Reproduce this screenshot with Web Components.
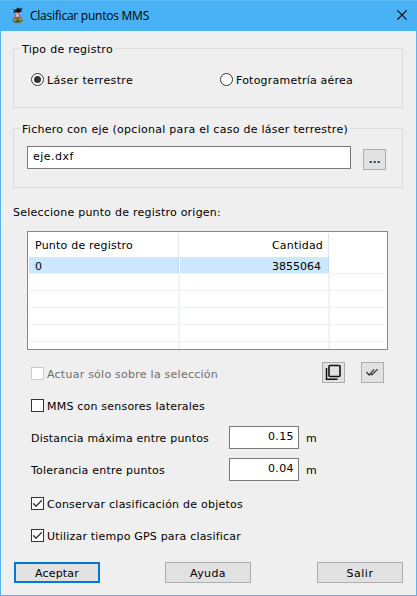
<!DOCTYPE html>
<html lang="es">
<head>
<meta charset="utf-8">
<title>Clasificar puntos MMS</title>
<style>
html,body{margin:0;padding:0}
body{width:417px;height:596px;overflow:hidden;font:11px/16px "DejaVu Sans",sans-serif;color:#000}
</style>
</head>
<body>
<mms-dialog></mms-dialog>
<script>
const make = (name, html, ready) => {
  const t = document.createElement('template');
  t.innerHTML = html;
  customElements.define(name, class extends HTMLElement {
    constructor() {
      super();
      this.attachShadow({ mode: 'open' }).appendChild(t.content.cloneNode(true));
    }
    connectedCallback() { if (ready) ready.call(this, this.shadowRoot); }
  });
};

// Text run tracked to an exact width
make('ui-text', `<style>
:host{display:block;height:14px;white-space:pre;flex:none}
span{display:inline-block}
</style><span><slot></slot></span>`, function (r) {
  const w = +this.getAttribute('w'), s = r.querySelector('span');
  this.style.width = w + 'px';
  const n = this.textContent.length;
  s.style.letterSpacing = (w - s.getBoundingClientRect().width) / n + 'px';
});

make('ui-titlebar', `<style>
:host{display:flex;height:31px;box-sizing:border-box;background:#49b2f4;border-top:1px solid #5cb9f3;padding:0 10px 0 11px;align-items:flex-start;font:12px/14px "Open Sans","Noto Sans",sans-serif}
.logo{margin:5px 5px 0 0;flex:none}
.t{margin-top:8px}
.x{margin:9px 0 0 auto;flex:none}
</style>
<svg class="logo" width="14" height="18" viewBox="0 0 14 18">
<path d="M1.500 3.500l3 .2L7 1.500l1.500 1.300L11.500 2 10 4.200l1.500.8L9 6 7.500 7.300 5 6.300 2 7 3.500 5z" fill="#111722"/>
<path d="M5.500 6.500L3.500 12M7 6.500L9.500 12" stroke="#d8475a" stroke-width="1.200" fill="none"/>
<path d="M5.500 7h1.500l1.500 4.500H4.500z" fill="#e4b9c8"/>
<ellipse cx="6.700" cy="14" rx="5" ry="3.300" fill="#66713c"/>
<path d="M3 13h2.500v1.500H3zM8 12.500h2.500V14H8z" fill="#b0a06d"/><path d="M5.500 14h2v2h-2zM3.500 15.500h2v1h-2z" fill="#3f5424"/>
</svg>
<div class="t"><slot></slot></div>
<svg class="x" width="10" height="10" viewBox="0 0 10 10"><path d="M.3.3l9.400 9.400M9.700.3L.3 9.700" stroke="#000" stroke-width="1.100"/></svg>`);

make('ui-group', `<style>
:host{display:block;box-sizing:border-box;width:390px;height:60px;border:1px solid #dcdcdc}
.l{display:block;width:fit-content;margin:-7px 0 0 6px;padding:0 2px;background:#efefef}
.b{display:flex;align-items:flex-start}
</style><div class="l"><slot name="legend"></slot></div><div class="b"><slot></slot></div>`);

make('ui-radio', `<style>
:host{display:flex;height:14px;gap:3px;flex:none}
svg{flex:none}
circle.d{display:none}
:host([checked]) circle.d{display:inline}
</style><svg width="13" height="13"><circle cx="6.5" cy="6.5" r="6" fill="#fff" stroke="#333"/><circle class="d" cx="6.5" cy="6.5" r="3.5" fill="#333"/></svg><slot></slot>`);

make('ui-check', `<style>
:host{display:flex;height:14px;gap:3px;flex:none}
svg{flex:none}
rect{fill:#fff;stroke:#333}
path{display:none;fill:none;stroke:#333;stroke-width:1.3}
:host([checked]) path{display:inline}
:host([disabled]){color:#6d6d6d}
:host([disabled]) rect{stroke:#ccc}
</style><svg width="13" height="13"><rect x=".5" y=".5" width="12" height="12"/><path d="M2.2 6.3l2.8 2.9 5.8-5.9"/></svg><slot></slot>`);

make('ui-field', `<style>
:host{display:flex;box-sizing:border-box;height:23px;border:1px solid #7a7a7a;background:#fff;padding:2px 5px 0;flex:none}
:host([num]){justify-content:flex-end;width:70px;padding-right:4px}
</style><slot></slot>`);

make('ui-button', `<style>
:host{display:flex;box-sizing:border-box;width:86px;height:21px;border:1px solid #adadad;background:#e1e1e1;justify-content:center;align-items:flex-start;padding-top:3px;flex:none}
:host([default]){border:2px solid #0078d7;padding-top:2px}
:host([icon]){width:23px;padding:0}
</style><slot></slot>`);

make('ui-table', `<style>
:host{display:block;box-sizing:border-box;width:361px;height:119px;border:1px solid #828790;background:#fff;padding:1px}
.r{display:grid;grid-template-columns:151px 150px 1fr;height:16px;border-bottom:1px solid #f0f0f0}
.h{display:grid;grid-template-columns:150px 150px 1fr;height:24px}
.r>div,.h>div{box-sizing:border-box;border-right:2px solid #edf2fb;padding-left:6px}
.h>div{border-right:1px solid #e5e5e5;padding-top:5px}
.r>div:last-child,.h>div:last-child{border:0;padding:0}
.n{display:flex;justify-content:flex-end}
.s>div{padding-top:2px}
.s>div:not(:last-child){background:#cce8ff;border-right:1px solid #b9ddf8;margin-right:1px}
.s .n{padding-right:7px}
.h .n{padding-right:5px}
.r.z{border:0;height:7px}
</style>
<div class="h"><div><slot name="h1"></slot></div><div class="n"><slot name="h2"></slot></div><div></div></div>
<div class="r s"><div><slot name="c1"></slot></div><div class="n"><slot name="c2"></slot></div><div></div></div>
<div class="r"><div></div><div></div><div></div></div>
<div class="r"><div></div><div></div><div></div></div>
<div class="r"><div></div><div></div><div></div></div>
<div class="r"><div></div><div></div><div></div></div>
<div class="r z"><div></div><div></div><div></div></div>`);

make('mms-dialog', `<style>
:host{display:flex;flex-direction:column;box-sizing:border-box;width:417px;height:596px;background:#efefef}
main{flex:1;box-sizing:border-box;border:1px solid #5ab5ee;border-top:0;padding:17px 0 0 12px;min-height:0}
.row{display:flex;align-items:flex-start}
</style>
<ui-titlebar><ui-text w="119">Clasificar puntos MMS</ui-text></ui-titlebar>
<main>
<ui-group>
  <ui-text slot="legend" w="91">Tipo de registro</ui-text>
  <ui-radio checked style="margin:17px 0 0 17px"><ui-text w="86">Láser terrestre</ui-text></ui-radio>
  <ui-radio style="margin:17px 0 0 87px"><ui-text w="117">Fotogrametría aérea</ui-text></ui-radio>
</ui-group>
<ui-group style="margin-top:20px">
  <ui-text slot="legend" w="326">Fichero con eje (opcional para el caso de láser terrestre)</ui-text>
  <ui-field style="width:324px;margin:10px 0 0 13px"><ui-text w="41">eje.dxf</ui-text></ui-field>
  <ui-button icon style="margin:13px 0 0 12px;padding-top:2px;color:#123a63;font-weight:bold"><ui-text w="12">...</ui-text></ui-button>
</ui-group>
<ui-text w="208" style="margin:17px 0 0 0">Seleccione punto de registro origen:</ui-text>
<ui-table style="margin:12px 0 0 14px">
  <ui-text slot="h1" w="98">Punto de registro</ui-text><ui-text slot="h2" w="51">Cantidad</ui-text>
  <ui-text slot="c1" w="7">0</ui-text><ui-text slot="c2" w="49">3855064</ui-text>
</ui-table>
<div class="row" style="margin:12px 0 0 18px;height:37px">
  <ui-check disabled style="margin-top:5px"><ui-text w="171">Actuar sólo sobre la selección</ui-text></ui-check>
  <ui-button icon style="margin-left:104px"><svg width="21" height="19" viewBox="0 0 21 19"><rect x="6" y="2.5" width="11" height="11" rx="1" fill="none" stroke="#111" stroke-width="1.6"/><path d="M3.5 5v11.2H14.5" fill="none" stroke="#111" stroke-width="1.5"/></svg></ui-button>
  <ui-button icon style="margin-left:16px"><svg width="21" height="19" viewBox="0 0 21 19"><path d="M4.5 9l2.700 3 5-5.600M8.700 10.800l1.200 1.200 5.800-5.800" fill="none" stroke="#333" stroke-width="1.200"/></svg></ui-button>
</div>
<ui-check style="margin-left:18px"><ui-text w="158">MMS con sensores laterales</ui-text></ui-check>
<div class="row" style="margin:13px 0 0 18px;height:32px">
  <ui-text w="178" style="margin:5px 20px 0 0">Distancia máxima entre puntos</ui-text>
  <ui-field num><ui-text w="26">0.15</ui-text></ui-field><ui-text w="11" style="margin:5px 0 0 7px">m</ui-text>
</div>
<div class="row" style="margin:0 0 0 18px;height:39px">
  <ui-text w="134" style="margin:5px 64px 0 0">Tolerancia entre puntos</ui-text>
  <ui-field num><ui-text w="26">0.04</ui-text></ui-field><ui-text w="11" style="margin:5px 0 0 7px">m</ui-text>
</div>
<ui-check checked style="margin-left:18px"><ui-text w="196">Conservar clasificación de objetos</ui-text></ui-check>
<ui-check checked style="margin:18px 0 0 18px"><ui-text w="194">Utilizar tiempo GPS para clasificar</ui-text></ui-check>
<div class="row" style="margin:19px 0 0 1px">
  <ui-button default><ui-text w="44">Aceptar</ui-text></ui-button>
  <ui-button style="margin-left:65px"><ui-text w="36">Ayuda</ui-text></ui-button>
  <ui-button style="margin-left:66px"><ui-text w="27">Salir</ui-text></ui-button>
</div>
</main>`);
</script>
</body>
</html>
